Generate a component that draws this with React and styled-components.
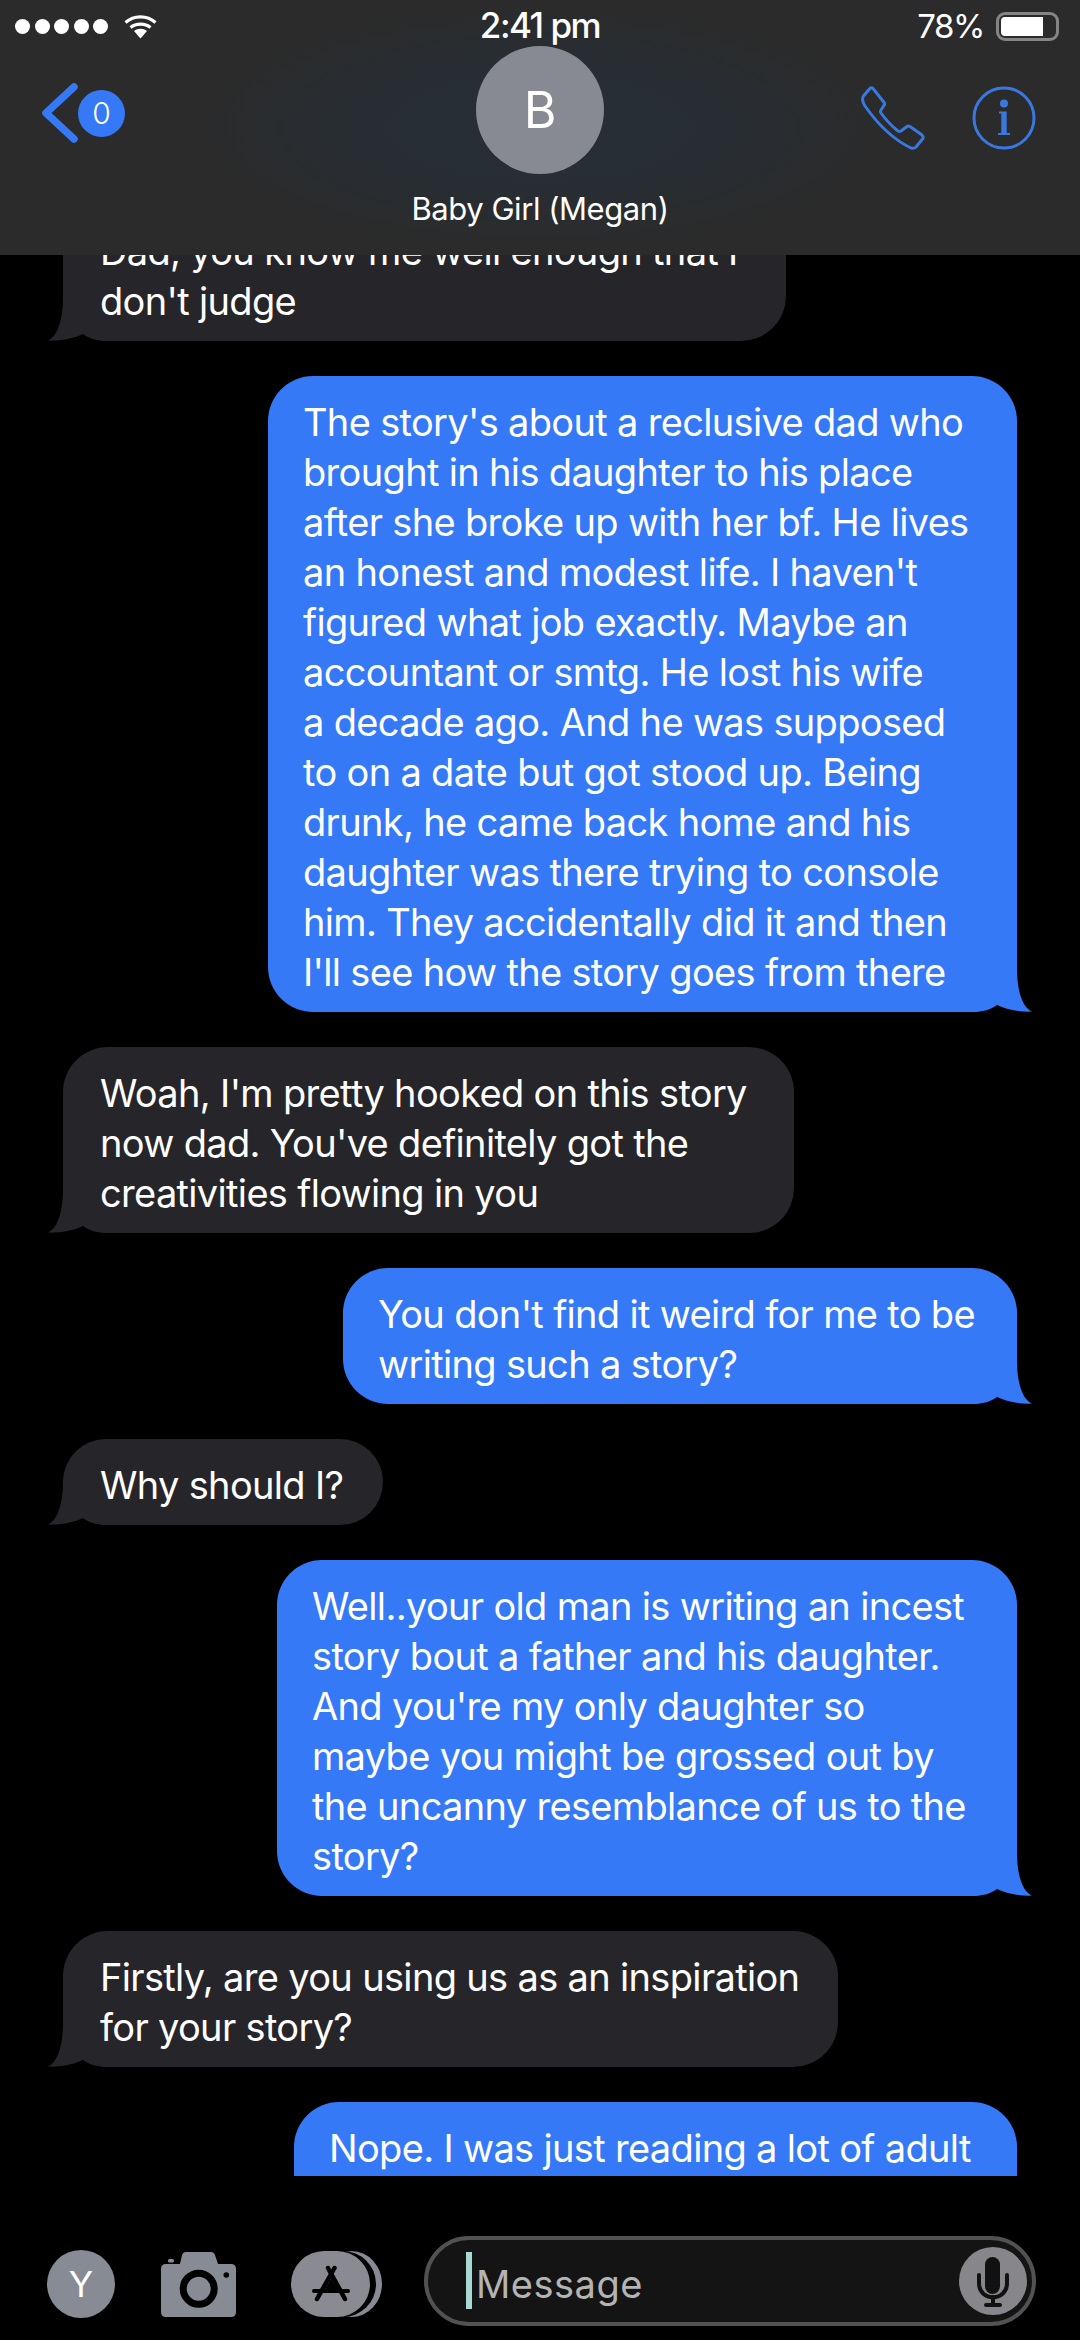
import React from 'react';
import styled, { createGlobalStyle } from 'styled-components';

const FONT = `Inter, "Noto Sans", "Liberation Sans", sans-serif`;

const GlobalStyle = createGlobalStyle`
  html, body {
    margin: 0;
    background: #000;
  }
`;

const Screen = styled.div`
  width: 1080px;
  height: 2340px;
  display: flex;
  flex-direction: column;
  overflow: hidden;
  background: #000;
  color: #fff;
  font-family: ${FONT};
`;

const Header = styled.header`
  height: 255px;
  flex: none;
  background:
    radial-gradient(ellipse 340px 120px at 50% 50%, #272e36 0%, rgba(39, 46, 54, 0.75) 55%, rgba(43, 43, 43, 0) 100%),
    #2b2b2b;
`;

const StatusBar = styled.div`
  height: 40px;
  padding-top: 6px;
  display: grid;
  grid-template-columns: 1fr auto 1fr;
  align-items: center;
`;

const StatusLeft = styled.div`
  display: flex;
  align-items: center;
  padding-left: 15px;
`;

const Dots = styled.div`
  display: flex;
  gap: 4.5px;
  margin-right: 16px;
`;

const Dot = styled.span`
  width: 15px;
  height: 15px;
  border-radius: 50%;
  background: #fff;
`;

const Clock = styled.div`
  font-size: 35px;
  font-weight: 500;
  letter-spacing: -1.5px;
  margin-top: -2px;
`;

const StatusRight = styled.div`
  display: flex;
  align-items: center;
  justify-content: flex-end;
  padding-right: 21px;
  gap: 12px;
`;

const Percent = styled.span`
  font-size: 33px;
  letter-spacing: -1.4px;
`;

const Battery = styled.div`
  width: 63px;
  height: 29px;
  box-sizing: border-box;
  border: 3px solid #858585;
  border-radius: 9px;
  padding: 2px 13px 2px 2px;
`;

const BatteryFill = styled.div`
  height: 100%;
  background: #fff;
  border-radius: 4px 0 0 4px;
`;

const NavRow = styled.div`
  display: grid;
  grid-template-columns: 1fr auto 1fr;
  align-items: start;
`;

const BackButton = styled.div`
  display: flex;
  align-items: center;
  padding: 37px 0 0 42px;
`;

const Badge = styled.span`
  width: 47px;
  height: 47px;
  border-radius: 50%;
  background: #3579f6;
  display: flex;
  align-items: center;
  justify-content: center;
  font-size: 30px;
  font-weight: 300;
`;

const Contact = styled.div`
  display: flex;
  flex-direction: column;
  align-items: center;
`;

const Avatar = styled.div`
  width: 128px;
  height: 128px;
  border-radius: 50%;
  background: #878a92;
  display: flex;
  align-items: center;
  justify-content: center;
  font-size: 50px;
`;

const ContactName = styled.div`
  margin-top: 15px;
  font-size: 31px;
  line-height: 40px;
  letter-spacing: -0.45px;
`;

const NavActions = styled.div`
  display: flex;
  justify-content: flex-end;
  gap: 47px;
  padding: 40px 44px 0 0;
`;

const Thread = styled.main`
  flex: 1;
  min-height: 0;
  overflow: hidden;
  display: flex;
  flex-direction: column;
  gap: 35px;
  padding: 0 63px;
`;

const Bubble = styled.div`
  position: relative;
  flex: none;
  box-sizing: border-box;
  align-self: ${(p) => (p.$mine ? 'flex-end' : 'flex-start')};
  width: ${(p) => p.$width}px;
  margin-top: ${(p) => p.$offset || 0}px;
  padding: 21px 0 ${(p) => (p.$cut ? 80 : 15)}px ${(p) => (p.$mine ? 35 : 37)}px;
  border-radius: 45px;
  background: ${(p) => (p.$mine ? '#3579f6' : '#26252a')};
  font-size: 38px;
  line-height: 50px;
  letter-spacing: -0.67px;
  white-space: pre;
`;

const BubbleText = styled.span`
  position: relative;
  z-index: 1;
`;

const TailShape = styled.svg`
  position: absolute;
  bottom: 0;
  ${(p) => (p.$mine ? 'right: -15px;' : 'left: -15px; transform: scaleX(-1);')}
`;

const Composer = styled.footer`
  flex: none;
  height: 164px;
  box-sizing: border-box;
  display: flex;
  align-items: flex-start;
  padding: 60px 44px 0 47px;
`;

const Apps = styled.div`
  display: flex;
  align-items: center;
  padding-top: 14px;
  margin-right: 42px;
`;

const ProfileChip = styled.div`
  width: 68px;
  height: 68px;
  border-radius: 50%;
  background: #868b94;
  display: flex;
  align-items: center;
  justify-content: center;
  font-size: 36px;
  margin-right: 46px;
`;

const CameraIcon = styled.svg`
  margin-right: 55px;
  display: block;
`;

const MessageField = styled.div`
  flex: 1;
  height: 90px;
  box-sizing: border-box;
  border: 4px solid #525252;
  border-radius: 45px;
  background: #141414;
  display: flex;
  align-items: center;
  padding: 0 5px 0 38px;
`;

const Caret = styled.span`
  width: 6px;
  height: 57px;
  background: #a9d9d3;
  margin-top: -2px;
`;

const Placeholder = styled.span`
  flex: 1;
  margin: 5px 0 0 4px;
  font-size: 38px;
  letter-spacing: 0.5px;
  color: #b4b4b4;
`;

const MicButton = styled.div`
  width: 68px;
  height: 68px;
  border-radius: 50%;
  background: #87878b;
  display: flex;
  align-items: center;
  justify-content: center;
`;

const messages = [
  { width: 723, offset: -50, text: "Dad, you know me well enough that I\ndon't judge" },
  {
    mine: true,
    width: 749,
    text: "The story's about a reclusive dad who\nbrought in his daughter to his place\nafter she broke up with her bf. He lives\nan honest and modest life. I haven't\nfigured what job exactly. Maybe an\naccountant or smtg. He lost his wife\na decade ago. And he was supposed\nto on a date but got stood up. Being\ndrunk, he came back home and his\ndaughter was there trying to console\nhim. They accidentally did it and then\nI'll see how the story goes from there",
  },
  { width: 731, text: "Woah, I'm pretty hooked on this story\nnow dad. You've definitely got the\ncreativities flowing in you" },
  { mine: true, width: 674, text: "You don't find it weird for me to be\nwriting such a story?" },
  { width: 320, text: 'Why should I?' },
  {
    mine: true,
    width: 740,
    text: "Well..your old man is writing an incest\nstory bout a father and his daughter.\nAnd you're my only daughter so\nmaybe you might be grossed out by\nthe uncanny resemblance of us to the\nstory?",
  },
  { width: 775, text: 'Firstly, are you using us as an inspiration\nfor your story?' },
  { mine: true, width: 723, cut: true, text: 'Nope. I was just reading a lot of adult' },
];

function Tail({ mine, color }) {
  return (
    <TailShape $mine={mine} width="60" height="46" viewBox="0 0 60 46">
      <path
        fill={color}
        d="M45 2 C45 24 50 41 60 45.6 C48 46 35 44 25 39 C18 44 10 46 0 46 L0 0 L45 0 Z"
      />
    </TailShape>
  );
}

function WifiIcon() {
  return (
    <svg width="33" height="25" viewBox="0 0 33 25" fill="none" stroke="#fff" strokeWidth="3.2">
      <path d="M1.5 8.5 C10 1 23 1 31.5 8.5" />
      <path d="M6.5 13.5 C12 9 21 9 26.5 13.5" />
      <path d="M10 17 L16.5 24.5 L23 17 C19 14 14 14 10 17Z" fill="#fff" stroke="none" />
    </svg>
  );
}

function Chevron() {
  return (
    <svg width="36" height="60" viewBox="0 0 36 60" fill="none" stroke="#3579f6" strokeWidth="7.5" strokeLinecap="round" strokeLinejoin="round">
      <path d="M32 4 L4 30 L32 56" />
    </svg>
  );
}

function PhoneIcon() {
  return (
    <svg width="64" height="64" viewBox="0 0 64 64" fill="none" stroke="#3a78e0" strokeWidth="3">
      <path d="M12 2.5 L23.5 17 Q24 18.5 23 19.5 L20 24 Q19 25.5 20 27 Q27 37 37 45 Q38.5 46 40 45 L46 40.5 Q47.5 39.5 49 40.5 L61 49 Q63 51 61.5 53 L55 61 Q53 63 50 62 Q25 50 4 20 Q0 14 2.5 10 L8 3.5 Q10 1 12 2.5Z" />
    </svg>
  );
}

function InfoIcon() {
  return (
    <svg width="64" height="64" viewBox="0 0 64 64" fill="none">
      <circle cx="32" cy="32" r="30" stroke="#3a78e0" strokeWidth="3" />
      <circle cx="32" cy="17.5" r="4" fill="#3a78e0" />
      <path fill="#3a78e0" d="M27 25.5 H34.7 V47 H38 V49 H26 V47 H29.3 V27.5 H27Z" />
    </svg>
  );
}

function Camera() {
  return (
    <CameraIcon width="75" height="65" viewBox="0 0 75 65">
      <path
        fill="#868b94"
        d="M25 0 H50 Q53 0 54 3 L57 12 H70 Q75 12 75 17 V60 Q75 65 70 65 H5 Q0 65 0 60 V17 Q0 12 5 12 H19 L21 3 Q22 0 25 0Z"
      />
      <rect x="7" y="7" width="6" height="3.5" rx="1.5" fill="#868b94" />
      <circle cx="37.7" cy="36.7" r="15.5" fill="none" stroke="#000" strokeWidth="7" />
      <circle cx="65.3" cy="23" r="2.8" fill="#000" />
    </CameraIcon>
  );
}

function AppStore() {
  return (
    <svg width="91" height="66" viewBox="0 0 91 66" style={{ display: 'block' }}>
      <rect x="30" y="0" width="61" height="66" rx="33" fill="#868b94" />
      <rect x="16" y="0" width="69" height="66" rx="33" fill="#000" />
      <rect x="0" y="0" width="79" height="66" rx="33" fill="#8a8b92" />
      <g fill="none" stroke="#000" strokeLinecap="round">
        <path strokeWidth="4.5" d="M43.5 17 L26 48" />
        <path strokeWidth="4.5" d="M37 17 L54 48" />
        <path strokeWidth="4" d="M23 40 H57" />
      </g>
      <path fill="#000" d="M40.3 27 L33.5 39 H47Z" />
    </svg>
  );
}

function MicIcon() {
  return (
    <svg width="68" height="68" viewBox="0 0 68 68" fill="none" stroke="#111" strokeWidth="4" strokeLinecap="round">
      <rect x="26" y="10" width="15" height="37" rx="7.5" fill="#111" stroke="none" />
      <path d="M20 28 V36 C20 55 48 55 48 36 V28" />
      <path d="M34 50 V57" />
      <path d="M27 58 H41" />
    </svg>
  );
}

export default function App() {
  return (
    <Screen>
      <GlobalStyle />
      <Header>
        <StatusBar>
          <StatusLeft>
            <Dots>
              {[0, 1, 2, 3, 4].map((i) => (
                <Dot key={i} />
              ))}
            </Dots>
            <WifiIcon />
          </StatusLeft>
          <Clock>2:41 pm</Clock>
          <StatusRight>
            <Percent>78%</Percent>
            <Battery>
              <BatteryFill />
            </Battery>
          </StatusRight>
        </StatusBar>
        <NavRow>
          <BackButton>
            <Chevron />
            <Badge>0</Badge>
          </BackButton>
          <Contact>
            <Avatar>B</Avatar>
            <ContactName>Baby Girl (Megan)</ContactName>
          </Contact>
          <NavActions>
            <PhoneIcon />
            <InfoIcon />
          </NavActions>
        </NavRow>
      </Header>

      <Thread>
        {messages.map((m, i) => {
          const last = i === messages.length - 1;
          return (
            <Bubble key={i} $mine={m.mine} $width={m.width} $offset={m.offset} $cut={m.cut}>
              <BubbleText>{m.text}</BubbleText>
              {!last && <Tail mine={m.mine} color={m.mine ? '#3579f6' : '#26252a'} />}
            </Bubble>
          );
        })}
      </Thread>

      <Composer>
        <Apps>
          <ProfileChip>Y</ProfileChip>
          <Camera />
          <AppStore />
        </Apps>
        <MessageField>
          <Caret />
          <Placeholder>Message</Placeholder>
          <MicButton>
            <MicIcon />
          </MicButton>
        </MessageField>
      </Composer>
    </Screen>
  );
}
